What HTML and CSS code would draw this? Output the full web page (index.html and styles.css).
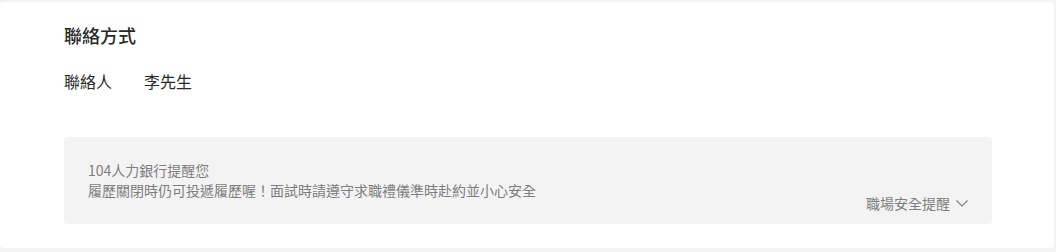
FILE: index.html
```html
<!DOCTYPE html>
<html lang="zh-Hant">

<head>
    <meta charset="UTF-8">
    <meta name="viewport" content="width=device-width, initial-scale=1.0">
    <title>聯絡方式</title>
    <link rel="stylesheet" href="styles.css">
</head>

<body>

    <div class="card">
        <h2 class="title">聯絡方式</h2>

        <!-- Contact row -->
        <div class="contact-row">
            <span class="label">聯絡人</span>
            <span class="value">李先生</span>
        </div>

        <!-- Safety notice -->
        <div class="notice">
            <div class="notice-text">
                <p>104人力銀行提醒您</p>
                <p>履歷關閉時仍可投遞履歷喔！面試時請遵守求職禮儀準時赴約並小心安全</p>
            </div>
            <a class="notice-link" href="#">
                職場安全提醒
                <svg width="12" height="7" viewBox="0 0 12 7">
                    <path d="M0.5 0.5 L6 6 L11.5 0.5" fill="none" stroke="#7e7e7e" stroke-width="1.1" />
                </svg>
            </a>
        </div>
    </div>

</body>

</html>
```

FILE: styles.css
```css
body {
    font-family: "Noto Sans CJK TC", "Liberation Sans", sans-serif;
    background-color: #f3f3f3;
    margin: 0;
    padding: 2px 2px 0 0;
}

.card {
    background-color: #fff;
    border-radius: 4px;
    padding: 20px 62px 24px 64px;
}

.title {
    margin: 0;
    font-size: 18px;
    line-height: 26px;
    font-weight: 500;
    color: #292929;
}

.contact-row {
    display: flex;
    margin-top: 21px;
    font-size: 16px;
    line-height: 24px;
    color: #292929;
}

.contact-row .label {
    width: 80px;
}

.notice {
    display: flex;
    justify-content: space-between;
    align-items: flex-end;
    margin-top: 44px;
    padding: 23px 24px 11px;
    background-color: #f3f3f3;
    border-radius: 4px;
    font-size: 14px;
    line-height: 20px;
    color: #7e7e7e;
}

.notice-text {
    margin-bottom: 13px;
}

.notice-text p {
    margin: 0;
}

.notice-link {
    display: flex;
    align-items: center;
    gap: 6px;
    color: #7e7e7e;
    text-decoration: none;
}
```
